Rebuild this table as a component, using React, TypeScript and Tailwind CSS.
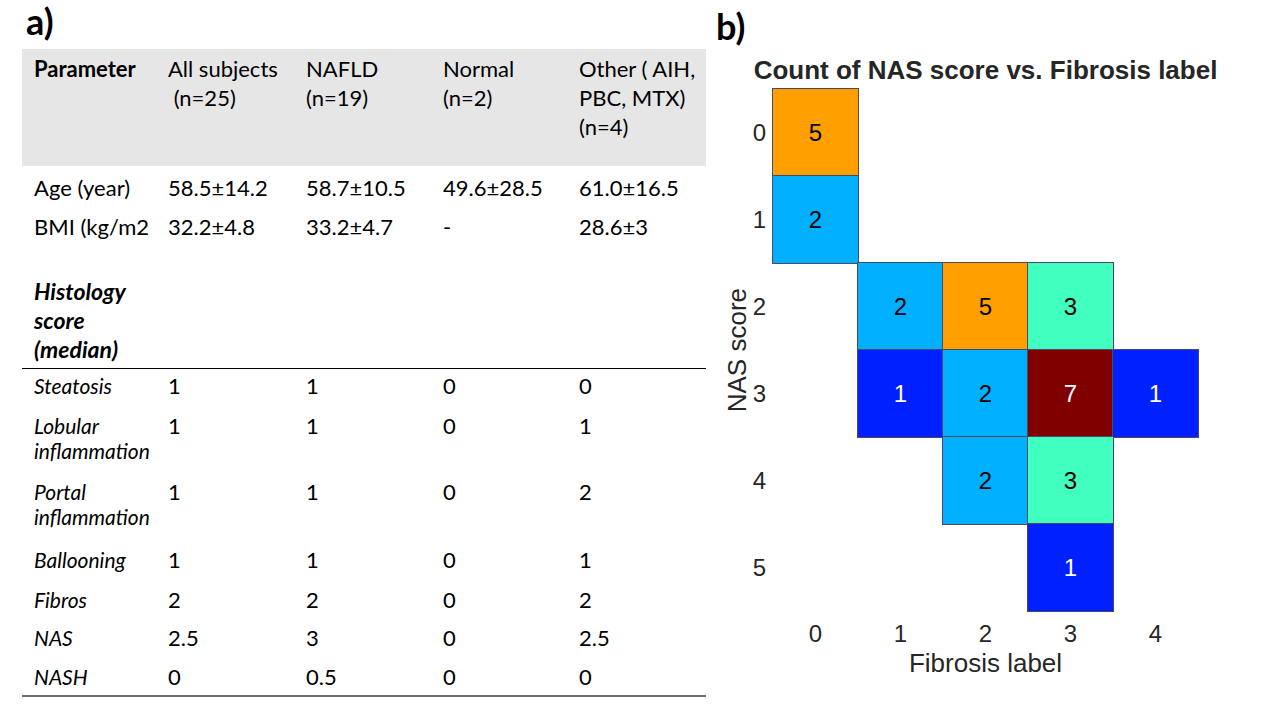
const cols = 'grid grid-cols-[146px_138px_137px_136px_127px]'

const histology: { label: string[]; values: string[]; h: string }[] = [
  { label: ['Steatosis'], values: ['1', '1', '0', '0'], h: 'h-[40px]' },
  { label: ['Lobular', 'inflammation'], values: ['1', '1', '0', '1'], h: 'h-[66px]' },
  { label: ['Portal', 'inflammation'], values: ['1', '1', '0', '2'], h: 'h-[68px]' },
  { label: ['Ballooning'], values: ['1', '1', '0', '1'], h: 'h-[40px]' },
  { label: ['Fibros'], values: ['2', '2', '0', '2'], h: 'h-[38px]' },
  { label: ['NAS'], values: ['2.5', '3', '0', '2.5'], h: 'h-[39px]' },
  { label: ['NASH'], values: ['0', '0.5', '0', '0'], h: 'h-[35px]' },
]

// heatmap: rows are NAS score 0..5, columns fibrosis label 0..4
const jet: Record<number, { bg: string; fg: string }> = {
  1: { bg: 'bg-[#0020ff]', fg: 'text-white' },
  2: { bg: 'bg-[#00b0ff]', fg: 'text-black' },
  3: { bg: 'bg-[#40ffbf]', fg: 'text-black' },
  5: { bg: 'bg-[#ffa000]', fg: 'text-black' },
  7: { bg: 'bg-[#800000]', fg: 'text-white' },
}

const counts: (number | null)[][] = [
  [5, null, null, null, null],
  [2, null, null, null, null],
  [null, 2, 5, 3, null],
  [null, 1, 2, 7, 1],
  [null, null, 2, 3, null],
  [null, null, null, 1, null],
]

function Table() {
  return (
    <section className="w-[710px] shrink-0 font-['Lato','Liberation_Sans',sans-serif] text-black">
      <div className="h-[49px] pl-[26px] pt-[1px] text-[36px] font-bold leading-[40px]">a)</div>
      <div className="ml-[22px] w-[684px]">
        {/* header */}
        <div className={`${cols} h-[117px] bg-[#e7e6e6] pt-[5px] text-[22px] leading-[29px]`}>
          <div className="pl-[12px] font-bold">Parameter</div>
          <div>
            All subjects
            <br />
            &nbsp;(n=25)
          </div>
          <div>
            NAFLD
            <br />
            (n=19)
          </div>
          <div>
            Normal
            <br />
            (n=2)
          </div>
          <div className="whitespace-nowrap">
            Other ( AIH,
            <br />
            PBC, MTX)
            <br />
            (n=4)
          </div>
        </div>

        <div className={`${cols} h-[40px] items-center pt-[2px] text-[22px]`}>
          <div className="pl-[12px]">Age (year)</div>
          <div>58.5±14.2</div>
          <div>58.7±10.5</div>
          <div>49.6±28.5</div>
          <div>61.0±16.5</div>
        </div>
        <div className={`${cols} h-[40px] items-center text-[22px]`}>
          <div className="whitespace-nowrap pl-[12px]">BMI (kg/m2</div>
          <div>32.2±4.8</div>
          <div>33.2±4.7</div>
          <div>-</div>
          <div>28.6±3</div>
        </div>

        <div className="flex h-[123px] items-end border-b border-black pb-[4px] pl-[12px] text-[23px] font-bold italic leading-[29px]">
          <div>
            Histology
            <br />
            score
            <br />
            (median)
          </div>
        </div>

        <div className="border-b-2 border-[#6e6e6e]">
          {histology.map(row => (
            <div key={row.label.join(' ')} className={`${cols} ${row.h} pt-[4px] leading-[25px]`}>
              <div className="whitespace-nowrap pl-[12px] text-[21px] italic">
                {row.label.map(l => (
                  <div key={l}>{l}</div>
                ))}
              </div>
              {row.values.map((v, i) => (
                <div key={i} className="text-[22px]">
                  {v}
                </div>
              ))}
            </div>
          ))}
        </div>
      </div>
    </section>
  )
}

function Heatmap() {
  return (
    <section className="flex-1 text-[#262626]">
      <div className="h-[50px] pl-[6px] pt-[6px] font-['Lato','Liberation_Sans',sans-serif] text-[36px] font-bold leading-[40px] text-black">
        b)
      </div>
      <div className="font-['Liberation_Sans',Arial,sans-serif]">
        <div className="flex h-[39px] items-center">
          <div className="ml-[63px] flex w-[425px] justify-center">
            <span className="whitespace-nowrap text-[26px] font-bold leading-[30px]">
              Count of NAS score vs. Fibrosis label
            </span>
          </div>
        </div>

        <div className="flex">
          <div className="ml-[17px] flex w-[20px] items-center justify-center">
            <span className="rotate-180 whitespace-nowrap text-[26px] leading-[24px] [writing-mode:vertical-rl]">
              NAS score
            </span>
          </div>
          <div className="flex w-[26px] flex-col text-[24px]">
            {counts.map((_, r) => (
              <div key={r} className="flex h-[87px] items-center justify-end pr-[7px]">
                {r}
              </div>
            ))}
          </div>
          <div className="grid grid-cols-[repeat(5,85px)] grid-rows-[repeat(6,87px)]">
            {counts.flatMap((row, r) =>
              row.map((c, i) =>
                c === null ? (
                  <div key={`${r}-${i}`} />
                ) : (
                  <div
                    key={`${r}-${i}`}
                    className={`flex items-center justify-center text-[24px] outline-1 outline-offset-[-0.5px] outline-[#4a4a66] ${jet[c].bg} ${jet[c].fg}`}
                  >
                    {c}
                  </div>
                ),
              ),
            )}
          </div>
        </div>

        <div className="ml-[63px] grid h-[39px] grid-cols-[repeat(5,85px)] items-center pt-[7px] text-[24px] leading-[28px]">
          {[0, 1, 2, 3, 4].map(n => (
            <div key={n} className="text-center">
              {n}
            </div>
          ))}
        </div>
        <div className="ml-[63px] w-[425px] text-center text-[26px] leading-[26px]">Fibrosis label</div>
      </div>
    </section>
  )
}

export default function App() {
  return (
    <div className="flex h-[720px] w-[1280px] overflow-hidden bg-white">
      <Table />
      <Heatmap />
    </div>
  )
}
